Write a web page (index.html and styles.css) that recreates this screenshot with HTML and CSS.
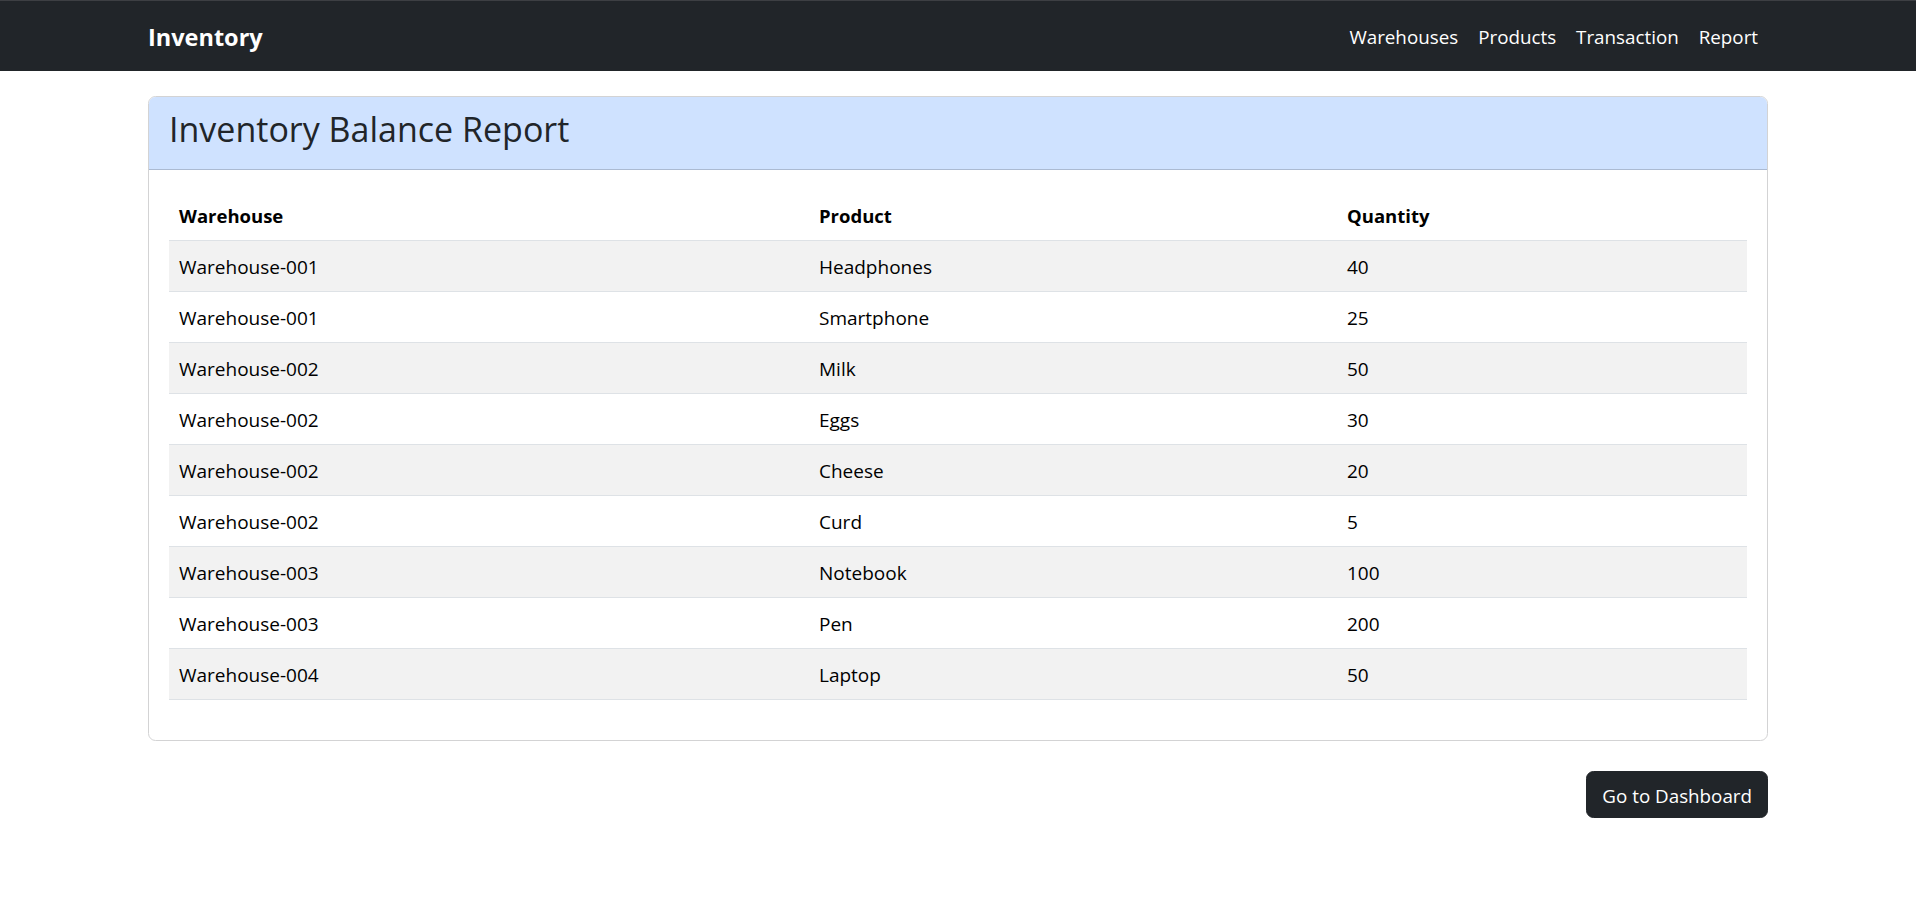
FILE: index.html
```html
<!DOCTYPE html>
<html lang="en">
<head>
<meta charset="utf-8">
<title>Inventory Balance Report</title>
<link rel="stylesheet" href="styles.css">
</head>
<body>
<nav class="navbar">
  <div class="container nav-inner">
    <a class="brand" href="#">Inventory</a>
    <ul class="nav-links">
      <li><a href="#">Warehouses</a></li>
      <li><a href="#">Products</a></li>
      <li><a href="#">Transaction</a></li>
      <li><a href="#">Report</a></li>
    </ul>
  </div>
</nav>
<main class="container main">
  <section class="card">
    <header class="card-header"><h3 class="card-title">Inventory Balance Report</h3></header>
    <div class="card-body">
      <table class="table">
        <thead>
          <tr><th class="col-wh">Warehouse</th><th class="col-pr">Product</th><th>Quantity</th></tr>
        </thead>
        <tbody>
          <tr><td>Warehouse-001</td><td>Headphones</td><td>40</td></tr>
          <tr><td>Warehouse-001</td><td>Smartphone</td><td>25</td></tr>
          <tr><td>Warehouse-002</td><td>Milk</td><td>50</td></tr>
          <tr><td>Warehouse-002</td><td>Eggs</td><td>30</td></tr>
          <tr><td>Warehouse-002</td><td>Cheese</td><td>20</td></tr>
          <tr><td>Warehouse-002</td><td>Curd</td><td>5</td></tr>
          <tr><td>Warehouse-003</td><td>Notebook</td><td>100</td></tr>
          <tr><td>Warehouse-003</td><td>Pen</td><td>200</td></tr>
          <tr><td>Warehouse-004</td><td>Laptop</td><td>50</td></tr>
        </tbody>
      </table>
    </div>
  </section>
  <div class="actions">
    <a class="btn" href="#">Go to Dashboard</a>
  </div>
</main>
</body>
</html>
```
FILE: styles.css
```css
* { box-sizing: border-box; }
html, body { margin: 0; padding: 0; }
body {
  font-family: "Segoe UI", "Open Sans", "Noto Sans", sans-serif;
  font-size: 19px;
  line-height: 30px;
  color: #212529;
  background: #fff;
}
a { text-decoration: none; }
.container {
  width: 1650px;
  margin: 0 auto;
  padding: 0 15px;
}
.navbar {
  background: #212529;
  border-top: 1px solid #3d3f43;
  height: 71px;
}
.nav-inner {
  height: 70px;
  display: flex;
  align-items: center;
  justify-content: space-between;
}
.brand {
  color: #fff;
  font-size: 23.5px;
  font-weight: 700;
  line-height: 37px;
  padding-top: 2px;
}
.nav-links {
  list-style: none;
  margin: 0;
  padding: 0;
  display: flex;
}
.nav-links a {
  display: block;
  color: #fff;
  padding: 11px 10px 9px;
  font-size: 18.8px;
  line-height: 30px;
}
.main { padding-top: 25px; }
.card {
  border: 1px solid #d3d3d4;
  border-radius: 7.5px;
  overflow: hidden;
}
.card-header {
  background: #cfe2ff;
  border-bottom: 1px solid #abbad2;
  padding: 11px 20px 9px;
}
.card-title {
  margin: 0 0 10px;
  font-size: 34px;
  font-weight: 500;
  line-height: 42px;
  color: #212529;
}
.card-body { padding: 20px; }
.table {
  width: 100%;
  border-collapse: collapse;
  margin-bottom: 20px;
  color: #000;
}
.table th, .table td {
  text-align: left;
  padding: 11px 10px 9px;
  border-bottom: 1px solid #dee2e6;
  vertical-align: top;
}
.table th { font-weight: 700; font-size: 18.5px; }
.col-wh { width: 640px; }
.col-pr { width: 528px; }
.table tbody tr:nth-child(odd) td { background: #f2f2f2; }
.actions {
  display: flex;
  justify-content: flex-end;
  margin-top: 30px;
}
.btn {
  display: inline-block;
  background: #212529;
  color: #fff;
  border: 1px solid #212529;
  border-radius: 7.5px;
  padding: 8.5px 15px 6.5px;
  line-height: 30px;
  font-size: 18.8px;
}
```
